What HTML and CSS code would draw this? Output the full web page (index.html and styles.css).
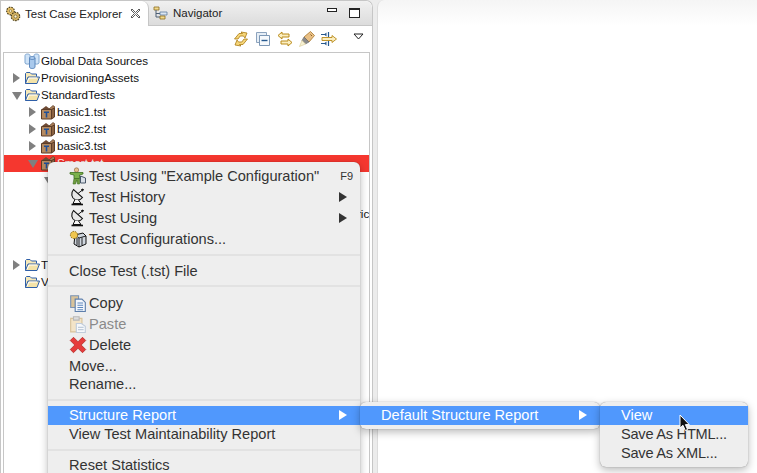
FILE: index.html
```html
<!DOCTYPE html>
<html lang="en">
<head>
<meta charset="utf-8">
<title>Test Case Explorer</title>
<link rel="stylesheet" href="styles.css">
</head>
<body>
<svg class="defs" width="0" height="0">
  <defs>
    <symbol id="i-folder" viewBox="0 0 16 16">
      <path d="M1.5 13.5V3.5L2.5 2.5H6L7.5 4H12.5V6.5" fill="#f7e9b8" stroke="#2f5fa8"/>
      <path d="M1.5 13.5L4 7H15.5L13 13.5Z" fill="#f4e3a8" stroke="#2f5fa8"/>
      <path d="M3 12.5L5 8H13" fill="none" stroke="#fff"/>
    </symbol>
    <symbol id="i-box" viewBox="0 0 16 16">
      <path d="M2 5L6 2L10 5Z" fill="#6e4a34"/>
      <path d="M9 5L13 1.5L15 3L12 6Z" fill="#a87c56" stroke="#5c3d28" stroke-width=".7"/>
      <path d="M1.5 5.5H11.5V15H1.5Z" fill="#b68a5f" stroke="#5c3d28"/>
      <path d="M11.5 5.5L14.5 4V13L11.5 15Z" fill="#8a6242" stroke="#5c3d28"/>
      <path d="M4 7.5H9V9H7.3V13.5H5.7V9H4Z" fill="#1f4f96"/>
    </symbol>
    <symbol id="i-db" viewBox="0 0 16 18">
      <path d="M1 3.5C1 1.5 6 1.5 6 3.5V11C6 12.5 1 12.5 1 11Z" fill="#cfe3f7" stroke="#7fa6d0"/>
      <path d="M10 3.5C10 1.5 15 1.5 15 3.5V11C15 12.5 10 12.5 10 11Z" fill="#cfe3f7" stroke="#7fa6d0"/>
      <path d="M5.5 6C5.5 4 11 4 11 6V15C11 17 5.5 17 5.5 15Z" fill="#a9c9ec" stroke="#5d88bd"/>
      <path d="M5.5 6C5.5 8 11 8 11 6" fill="none" stroke="#5d88bd"/>
    </symbol>
    <symbol id="i-gears" viewBox="0 0 16 16">
      <circle cx="5.5" cy="5" r="3.8" fill="#e9c268" stroke="#4f4320" stroke-width="1.2" stroke-dasharray="1.6 1"/>
      <circle cx="5.5" cy="5" r="1.3" fill="#fff5d0" stroke="#6b5a2c" stroke-width=".6"/>
      <circle cx="10.5" cy="10.5" r="4.2" fill="#d3b262" stroke="#4f4320" stroke-width="1.2" stroke-dasharray="1.6 1"/>
      <circle cx="10.5" cy="10.5" r="1.5" fill="#fff5d0" stroke="#5d4f28" stroke-width=".6"/>
    </symbol>
    <symbol id="i-nav" viewBox="0 0 16 16">
      <path d="M1 2H6V5H1Z" fill="#f2d98c" stroke="#8a6d20" stroke-width=".8"/>
      <path d="M3 5V12H7M3 8.5H7" fill="none" stroke="#4d5f75"/>
      <path d="M7 7H14V10H7Z" fill="#dbe6f2" stroke="#5d7c9e" stroke-width=".8"/>
      <path d="M7 11H12V14H7Z" fill="#f2d98c" stroke="#8a6d20" stroke-width=".8"/>
    </symbol>
    <symbol id="i-dish" viewBox="0 0 16 18">
      <path d="M3.5 1.5C0.5 5 1.5 10 5 11.5C8 12.5 11 11.5 12.5 9.5Z" fill="#e8e8e8" stroke="#111" stroke-width="1.1"/>
      <path d="M8 5.5L12.5 2" fill="none" stroke="#111"/>
      <path d="M11 1.5H14M12.5 0.5V3.5M11.5 1L13.5 3M13.5 1L11.5 3" stroke="#111" stroke-width=".7"/>
      <path d="M5 11.5L3 15.5H11L8.5 12" fill="#f4f4f4" stroke="#111"/>
      <path d="M1.5 16.5H13" stroke="#111" stroke-width="1.6"/>
    </symbol>
    <symbol id="i-run" viewBox="0 0 18 18">
      <circle cx="7.5" cy="3" r="2.2" fill="#e7c08d" stroke="#8a5d30" stroke-width=".6"/>
      <path d="M1 5.5H14V7L10.5 8V11.5H5V8L1 7Z" fill="#7cb24a" stroke="#3e6e20" stroke-width=".8"/>
      <path d="M5 11.5L4 17H6.5L7.8 13L8.5 17H10.5L10.5 11.5Z" fill="#6d9c3e" stroke="#3e6e20" stroke-width=".6"/>
      <path d="M11.5 9L16.5 11V16H11.5Z" fill="#d8dee6" stroke="#37465a" stroke-width=".9"/>
    </symbol>
    <symbol id="i-config" viewBox="0 0 18 18">
      <path d="M6 5L14 3L17 6V14L10 17L5 14Z" fill="#cfd6de" stroke="#111"/>
      <path d="M10 17V8L17 6M10 8L6 5M8 8V15M13 7.5V15" fill="none" stroke="#111" stroke-width=".9"/>
      <circle cx="5" cy="5" r="3.6" fill="#f0c64f" stroke="#8c6c14" stroke-dasharray="1.6 .9"/>
    </symbol>
    <symbol id="i-copy" viewBox="0 0 16 16">
      <path d="M1.5 1.5H8.5V12H1.5Z" fill="#d9c39a" stroke="#7b94b5"/>
      <path d="M5.5 4.5H11.5L14.5 7.5V15.5H5.5Z" fill="#f3f7fc" stroke="#5e7fab"/>
      <path d="M7.5 8H12.5M7.5 10H12.5M7.5 12H12.5M7.5 14H12.5" stroke="#5e88bd"/>
    </symbol>
    <symbol id="i-paste" viewBox="0 0 16 16">
      <path d="M1.5 3H11.5V15H1.5Z" fill="#f3e4c8" stroke="#d8c29a"/>
      <path d="M4 1.5H9V4.5H4Z" fill="#dedede" stroke="#b8b8b8"/>
      <path d="M6.5 7.5H11L14.5 10V15.5H6.5Z" fill="#f6f8fb" stroke="#c0ccdb"/>
      <path d="M8 11H13M8 13H13" stroke="#c0ccdb"/>
    </symbol>
    <symbol id="i-del" viewBox="0 0 14 14">
      <path d="M1 3.5L3.5 1L7 4.5L10.5 1L13 3.5L9.5 7L13 10.5L10.5 13L7 9.5L3.5 13L1 10.5L4.5 7Z" fill="#e63c3c" stroke="#b8332f" stroke-width=".7"/>
    </symbol>
    <symbol id="i-sync" viewBox="0 0 16 16">
      <path d="M1.5 8L6 2.5H9.5L8 1L14 2L12 7L10.5 5H7.2L5 8Z" fill="#f6d67a" stroke="#a97a12" stroke-width=".8"/>
      <path d="M14.5 8L10 13.5H6.5L8 15L2 14L4 9L5.5 11H8.8L11 8Z" fill="#f6d67a" stroke="#a97a12" stroke-width=".8"/>
    </symbol>
    <symbol id="i-collapse" viewBox="0 0 16 16">
      <path d="M1.5 1.5H11.5V11.5H1.5Z" fill="#e6eef6" stroke="#8ca3bd"/>
      <path d="M4.5 4.5H14.5V14.5H4.5Z" fill="#f6f9fc" stroke="#7c97b5"/>
      <path d="M6.5 9.5H12.5" stroke="#27598f" stroke-width="1.4"/>
    </symbol>
    <symbol id="i-link" viewBox="0 0 16 16">
      <path d="M1 4.5L5 1V3H12V6H5V8Z" fill="#fbeec0" stroke="#b98a18"/>
      <path d="M15 11.5L11 15V13H4V10H11V8Z" fill="#fbeec0" stroke="#b98a18"/>
    </symbol>
    <symbol id="i-pen" viewBox="0 0 16 16">
      <path d="M5 6L11.5 0.5L15.5 4.5L10 11Z" fill="#e8bf85" stroke="#a8762c" stroke-width=".8"/>
      <path d="M11.5 3.5L13 5" stroke="#8a5d20"/>
      <path d="M5 6L10 11L6.5 13L3 9.5Z" fill="#8b8b8b" stroke="#666" stroke-width=".6"/>
      <path d="M3 9.5L6.5 13L0.5 15.5Z" fill="#f8f2d6" stroke="#d9c98f" stroke-width=".6"/>
    </symbol>
    <symbol id="i-merge" viewBox="0 0 16 16">
      <path d="M0 3.5H5M0 12.5H5" stroke="#27598f" stroke-width="1.2"/>
      <path d="M7.5 1V6M7.5 10V15" stroke="#27598f" stroke-width="1.2"/>
      <path d="M3 3.5L5.5 1.5V5.5ZM3 12.5L5.5 10.5V14.5Z" fill="#27598f"/>
      <path d="M1 6.5H11V4.5L15.5 8L11 11.5V9.5H1Z" fill="#fbeec0" stroke="#b98a18" stroke-width=".9"/>
    </symbol>
  </defs>
</svg>

<div class="workbench">
  <section class="explorer">
    <div class="tabs">
      <div class="tab tab-active">
        <svg class="ico16"><use href="#i-gears"/></svg>
        <span class="tab-label">Test Case Explorer</span>
        <svg class="close" viewBox="0 0 11 11"><path d="M1 2L2 1L5.5 4.5L9 1L10 2L6.5 5.5L10 9L9 10L5.5 6.5L2 10L1 9L4.5 5.5Z" fill="#fff" stroke="#333" stroke-width=".8"/></svg>
      </div>
      <div class="tab">
        <svg class="ico16"><use href="#i-nav"/></svg>
        <span class="tab-label">Navigator</span>
      </div>
      <div class="win-buttons">
        <span class="btn-min"></span>
        <span class="btn-max"></span>
      </div>
    </div>
    <div class="toolbar">
      <svg class="ico16"><use href="#i-sync"/></svg>
      <svg class="ico16"><use href="#i-collapse"/></svg>
      <svg class="ico16"><use href="#i-link"/></svg>
      <svg class="ico16"><use href="#i-pen"/></svg>
      <svg class="ico16"><use href="#i-merge"/></svg>
      <svg class="view-menu" viewBox="0 0 11 7"><path d="M1 1H10L5.5 6Z" fill="#fff" stroke="#222"/></svg>
    </div>
    <div class="tree">
      <div class="row lvl0"><span class="twist"></span><svg class="ico-tall"><use href="#i-db"/></svg><span>Global Data Sources</span></div>
      <div class="row lvl0"><span class="twist closed"></span><svg class="ico16"><use href="#i-folder"/></svg><span>ProvisioningAssets</span></div>
      <div class="row lvl0"><span class="twist open"></span><svg class="ico16"><use href="#i-folder"/></svg><span>StandardTests</span></div>
      <div class="row lvl1"><span class="twist closed"></span><svg class="ico16"><use href="#i-box"/></svg><span>basic1.tst</span></div>
      <div class="row lvl1"><span class="twist closed"></span><svg class="ico16"><use href="#i-box"/></svg><span>basic2.tst</span></div>
      <div class="row lvl1"><span class="twist closed"></span><svg class="ico16"><use href="#i-box"/></svg><span>basic3.tst</span></div>
      <div class="row lvl1 row-selected"><span class="twist open"></span><svg class="ico16"><use href="#i-box"/></svg><span>Smart.tst</span></div>
      <div class="row lvl2"><span class="twist open"></span></div>
      <div class="row lvl2"></div>
      <div class="row lvl-end"><span>ric</span></div>
      <div class="row lvl2"></div>
      <div class="row lvl2"></div>
      <div class="row lvl0"><span class="twist closed"></span><svg class="ico16"><use href="#i-folder"/></svg><span>T</span></div>
      <div class="row lvl0"><span class="twist"></span><svg class="ico16"><use href="#i-folder"/></svg><span>V</span></div>
    </div>
  </section>
  <main class="editor"></main>
</div>

<nav class="menu menu-main">
  <div class="item"><svg class="ico18"><use href="#i-run"/></svg><span class="label">Test Using "Example Configuration"</span><span class="shortcut">F9</span></div>
  <div class="item"><svg class="ico18"><use href="#i-dish"/></svg><span class="label">Test History</span><span class="arrow"></span></div>
  <div class="item"><svg class="ico18"><use href="#i-dish"/></svg><span class="label">Test Using</span><span class="arrow"></span></div>
  <div class="item"><svg class="ico18"><use href="#i-config"/></svg><span class="label">Test Configurations...</span></div>
  <div class="sep sep-a"></div>
  <div class="item"><span class="label">Close Test (.tst) File</span></div>
  <div class="sep sep-b"></div>
  <div class="item"><svg class="ico18"><use href="#i-copy"/></svg><span class="label">Copy</span></div>
  <div class="item item-disabled"><svg class="ico18"><use href="#i-paste"/></svg><span class="label">Paste</span></div>
  <div class="item"><svg class="ico18"><use href="#i-del"/></svg><span class="label">Delete</span></div>
  <div class="item item-move"><span class="label">Move...</span></div>
  <div class="item item-rename"><span class="label">Rename...</span></div>
  <div class="sep sep-c"></div>
  <div class="item item-plain item-active"><span class="label">Structure Report</span><span class="arrow"></span></div>
  <div class="item item-plain"><span class="label">View Test Maintainability Report</span></div>
  <div class="sep sep-d"></div>
  <div class="item item-plain"><span class="label">Reset Statistics</span></div>
</nav>

<nav class="menu menu-sub1">
  <div class="item item-plain item-active"><span class="label">Default Structure Report</span><span class="arrow"></span></div>
</nav>

<nav class="menu menu-sub2">
  <div class="item item-plain item-active"><span class="label">View</span></div>
  <div class="item item-plain item-save"><span class="label">Save As HTML...</span></div>
  <div class="item item-plain item-save"><span class="label">Save As XML...</span></div>
</nav>

<svg class="cursor" viewBox="0 0 12 18"><path d="M1 1V14L4 11.3L6.3 16.5L8.6 15.5L6.4 10.6H10.3Z" fill="#111" stroke="#fff" stroke-width="1"/></svg>
</body>
</html>
```
FILE: styles.css
```css
* { box-sizing: border-box; }
html, body { margin: 0; height: 100%; overflow: hidden; }
body {
  background: #ececec;
  font-family: "Liberation Sans", Arial, sans-serif;
  color: #222;
}
.defs { position: absolute; }
.ico16 { width: 16px; height: 16px; flex: none; display: block; }
.ico18 { width: 18px; height: 18px; flex: none; display: block; }
.ico-tall { width: 16px; height: 18px; margin: -1px 0; flex: none; display: block; }

.workbench { display: flex; height: 473px; }
.explorer {
  width: 373px;
  flex: none;
  display: flex;
  flex-direction: column;
  background: #fff;
  border: 1px solid #c6c6c6;
  border-bottom: 0;
  border-radius: 0 7px 0 0;
}
.editor {
  flex: 1;
  margin-left: 4px;
  background: linear-gradient(#f5f5f5, #fff 26px);
  border-left: 1px solid #dcdcdc;
  border-radius: 7px 0 0 0;
}

.tabs {
  height: 25px;
  flex: none;
  display: flex;
  background: linear-gradient(#f0f0f0, #dcdcdc);
  border-bottom: 1px solid #c6c6c6;
  border-radius: 0 7px 0 0;
}
.tab {
  display: flex;
  align-items: center;
  gap: 4px;
  padding: 0 6px 0 4px;
  font-size: 11.5px;
  color: #222;
}
.tab-active {
  width: 148px;
  height: 25px;
  background: #fff;
  border-right: 1px solid #c6c6c6;
  border-radius: 0 7px 0 0;
}
.tab-label { white-space: nowrap; }
.close { width: 11px; height: 11px; margin-left: 4px; flex: none; }
.win-buttons {
  margin-left: auto;
  display: flex;
  gap: 12px;
  align-items: flex-start;
  padding: 7px 12px 0 0;
}
.btn-min { width: 10px; height: 4px; border: 1px solid #222; background: #fff; }
.btn-max { width: 11px; height: 10px; border: 1px solid #222; border-top-width: 2px; background: #fff; }

.toolbar {
  height: 26px;
  flex: none;
  display: flex;
  align-items: center;
  justify-content: flex-end;
  gap: 6px;
  padding: 0 8px 1px 0;
}
.view-menu { width: 11px; height: 7px; margin-left: 10px; margin-bottom: 5px; flex: none; }

.tree {
  flex: 1;
  margin: 0 2px;
  border: 1px solid #c6c6c6;
  border-bottom: 0;
  overflow: hidden;
}
.row {
  height: 17px;
  display: flex;
  align-items: center;
  gap: 1px;
  padding-bottom: 2px;
  font-size: 11.6px;
  white-space: nowrap;
  color: #111;
}
.lvl0 { padding-left: 7px; }
.lvl1 { padding-left: 23px; }
.lvl2 { padding-left: 39px; }
.lvl-end { padding-left: 353px; }
.row-selected { background: #f5372f; color: #fff; }
.twist { width: 12px; height: 12px; flex: none; position: relative; }
.twist.closed::before {
  content: "";
  position: absolute;
  left: 2px; top: 1px;
  border-style: solid;
  border-width: 5px 0 5px 7px;
  border-color: transparent transparent transparent #808080;
}
.twist.open::before {
  content: "";
  position: absolute;
  left: 1px; top: 3px;
  border-style: solid;
  border-width: 8px 5px 0 5px;
  border-color: #808080 transparent transparent transparent;
}

.menu {
  position: absolute;
  background: #eeeeee;
  border-radius: 6px;
  box-shadow: 0 0 1px rgba(0,0,0,.45), 0 3px 8px rgba(0,0,0,.28);
  font-size: 14.6px;
  color: #333;
  padding-top: 4px;
}
.menu-main { left: 48px; top: 162px; width: 312px; height: 330px; padding-top: 3px; }
.menu-sub1 { left: 360px; top: 402px; width: 240px; height: 27px; }
.menu-sub2 { left: 600px; top: 402px; width: 148px; height: 65px; }

.item {
  height: 21px;
  display: flex;
  align-items: center;
  padding-left: 21px;
  padding-right: 10px;
  white-space: nowrap;
}
.item .ico18 { margin-right: 2px; }
.item-plain { height: 19px; padding-bottom: 2px; }
.item-move { height: 19px; margin-top: 1px; }
.item-rename { height: 18px; }
.item-save .label { letter-spacing: -.25px; }
.item-active { background: #5098fd; color: #fff; }
.item-disabled { color: #8a8a8a; }
.label { flex: none; }
.shortcut { margin-left: auto; margin-right: -3px; font-size: 11px; }
.arrow {
  margin-left: auto;
  margin-right: 3px;
  border-style: solid;
  border-width: 5px 0 5px 8px;
  border-color: transparent transparent transparent #333;
}
.item-active .arrow { border-left-color: #fff; }
.sep { height: 2px; background: #e2e2e2; }
.sep-a { margin: 5px 0 4px; }
.sep-b { margin: 4px 0 5px; }
.sep-c { margin: 6px 0 5px; }
.sep-d { margin: 5px 0 5px; }

.cursor { position: absolute; left: 679px; top: 414px; width: 12px; height: 18px; }
```
